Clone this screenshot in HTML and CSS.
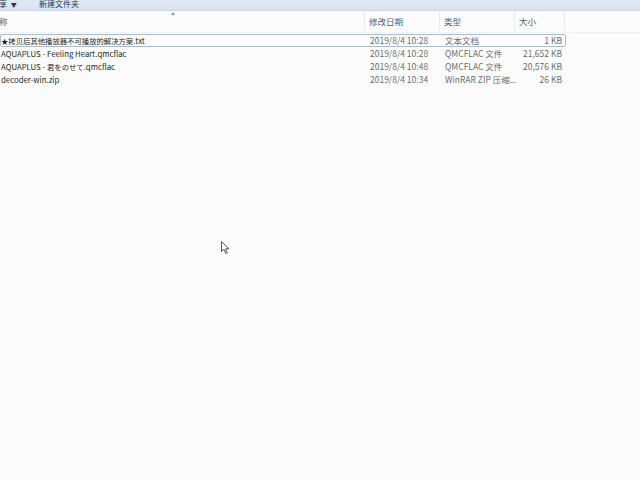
FILE: index.html
```
<!DOCTYPE html>
<html>
<head>
<meta charset="utf-8">
<link rel="stylesheet" href="styles.css">
</head>
<body>
<div class="toolbar">
  <span class="tb-item tb-share">享 <span class="caret">▼</span></span>
  <span class="tb-item tb-new">新建文件夹</span>
</div>
<div class="header">
  <div class="col c-name">称<span class="sort"></span></div>
  <div class="col c-date">修改日期</div>
  <div class="col c-type">类型</div>
  <div class="col c-size">大小</div>
</div>
<div class="list">
  <div class="row selected">
    <div class="cell c-name name"><span class="cjk">★拷贝后其他播放器不可播放的解决方案</span>.txt</div>
    <div class="cell c-date">2019/8/4 10:28</div>
    <div class="cell c-type">文本文档</div>
    <div class="cell c-size num">1 KB</div>
  </div>
  <div class="row">
    <div class="cell c-name name">AQUAPLUS - Feeling Heart.qmcflac</div>
    <div class="cell c-date">2019/8/4 10:28</div>
    <div class="cell c-type">QMCFLAC 文件</div>
    <div class="cell c-size num">21,652 KB</div>
  </div>
  <div class="row">
    <div class="cell c-name name">AQUAPLUS - <span class="cjk">君をのせて</span>.qmcflac</div>
    <div class="cell c-date">2019/8/4 10:48</div>
    <div class="cell c-type">QMCFLAC 文件</div>
    <div class="cell c-size num">20,576 KB</div>
  </div>
  <div class="row">
    <div class="cell c-name name">decoder-win.zip</div>
    <div class="cell c-date">2019/8/4 10:34</div>
    <div class="cell c-type">WinRAR ZIP 压缩...</div>
    <div class="cell c-size num">26 KB</div>
  </div>
</div>
<svg class="cursor" width="10" height="14" viewBox="0 0 10 14">
  <path d="M0.5 0.5 L0.5 10.5 L3 8.3 L4.8 12.5 L6.3 11.8 L4.6 7.8 L8 7.8 Z" fill="#fff" stroke="#555" stroke-width="1"/>
</svg>
</body>
</html>
```
FILE: styles.css
```
html, body {
  margin: 0;
  padding: 0;
  width: 640px;
  height: 480px;
  background: #fcfcfc;
  overflow: hidden;
  font-family: "Noto Sans CJK SC", "Noto Sans", sans-serif;
  font-size: 8.5px;
  position: relative;
}
.toolbar {
  height: 10px;
  background: linear-gradient(#dfe9f5, #d9e4f1);
  border-bottom: 1px solid #c9d6e5;
  display: flex;
  align-items: center;
  color: #1e3957;
  line-height: 10px;
  overflow: hidden;
  font-size: 8px;
}
.tb-item {
  white-space: nowrap;
  position: relative;
  top: -1px;
}
.tb-share {
  margin-left: -1px;
  width: 40px;
}
.caret {
  font-size: 6px;
  margin-left: 2px;
}
.header {
  display: flex;
  height: 20px;
  margin-top: 1px;
  color: #4d6078;
  line-height: 18px;
  border-bottom: 1px solid #eef1f5;
}
.col {
  box-sizing: border-box;
  height: 19px;
  white-space: nowrap;
  position: relative;
}
.header .col {
  border-right: 1px solid #e6ebf1;
}
.c-name { width: 366px; padding-left: 0; }
.c-date { width: 75px; padding-left: 4px; }
.c-type { width: 75px; padding-left: 4px; }
.c-size { width: 50px; padding-left: 4px; }
.header .c-name { margin-left: -1px; }
.sort {
  position: absolute;
  left: 172px;
  top: 0;
  width: 0;
  height: 0;
  border-left: 2px solid transparent;
  border-right: 2px solid transparent;
  border-bottom: 3px solid #7a9bc0;
}
.list {
  margin-top: 1px;
}
.row {
  display: flex;
  height: 13px;
  line-height: 13px;
  width: 566px;
  box-sizing: border-box;
  color: #6d6d6d;
}
.row.selected {
  border: 1px solid #a8bcd3;
  border-radius: 2px;
  line-height: 11px;
}
.row .cell {
  white-space: nowrap;
  overflow: hidden;
  box-sizing: border-box;
}
.row .name {
  color: #1e1e1e;
  padding-left: 1px;
  font-size: 7.8px;
}
.row .name .cjk {
  font-size: 7.35px;
}
.row.selected .name { padding-left: 0; }
.row .c-date { padding-left: 4px; }
.row.selected .c-name { width: 365px; }
.row .num {
  text-align: right;
  padding-right: 4px;
}
.row.selected .num { width: 49px; padding-right: 3px; }
.cursor {
  position: absolute;
  left: 221px;
  top: 241px;
}
```
